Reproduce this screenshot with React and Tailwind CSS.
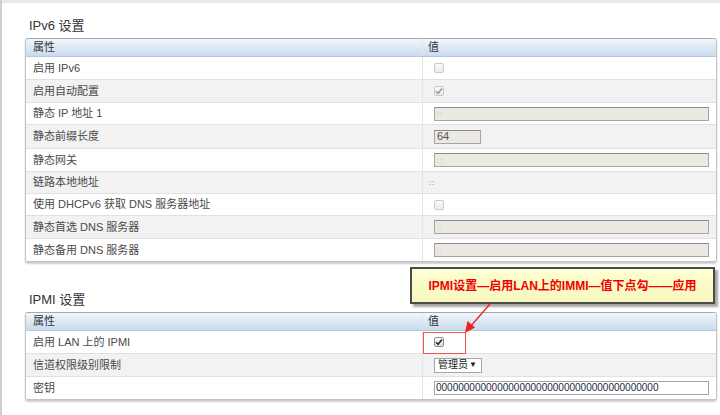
import React from 'react';

const font = { fontFamily: '"Liberation Sans", "Noto Sans CJK SC", sans-serif' };

function Box({ checked, enabled }) {
  return (
    <span
      className={
        enabled
          ? 'flex h-[10px] w-[10px] items-center justify-center rounded-[2px] border border-[#8f8f8f] bg-gradient-to-b from-[#fdfdfd] to-[#dcdcdc]'
          : 'flex h-[10px] w-[10px] items-center justify-center rounded-[2px] border border-[#c9c9c9] bg-gradient-to-b from-[#fafafa] to-[#ececec]'
      }
    >
      {checked && (
        <svg width="8" height="8" viewBox="0 0 8 8">
          <path
            d="M1 4.3 L3 6.3 L7 1.5"
            fill="none"
            stroke={enabled ? '#2b2b2b' : '#9a9a9a'}
            strokeWidth="1.6"
          />
        </svg>
      )}
    </span>
  );
}

function Disabled({ wide, text }) {
  return (
    <div
      className={
        (wide ? 'w-[275px] ' : 'w-[47px] ') +
        'flex h-[14px] shrink-0 items-center border border-[#a5a5a5] border-t-[#8a8a8a] bg-[#ebe9e2] pl-[2px]'
      }
    >
      <span className={text ? 'text-[11px] leading-none text-[#555]' : 'text-[7px] leading-none tracking-[1px] text-[#aaa]'}>
        {text || '::'}
      </span>
    </div>
  );
}

function Row({ label, h, shade, children, first }) {
  return (
    <div
      className={
        h +
        (shade ? ' bg-[#f2f2f2]' : ' bg-white') +
        (first ? '' : ' border-t border-[#e1e1e1]') +
        ' flex'
      }
    >
      <div className="flex w-[397px] shrink-0 items-center border-r border-[#e4e4e4] pl-[7px] text-[11px] text-[#4a4a4a]">
        {label}
      </div>
      <div className="flex min-w-0 flex-1 items-center pl-[11px]">{children}</div>
    </div>
  );
}

function Table({ children }) {
  return (
    <div className="overflow-hidden rounded-[3px] border border-[#c4c4c4] border-t-[#a8a8a8] shadow-[0_2px_2px_rgba(0,0,0,0.2)]">
      <div className="flex h-[18px] border-b border-[#b5c8dc] bg-gradient-to-b from-[#f1f7fd] to-[#c8dbee] text-[11px] text-[#333]">
        <div className="flex w-[397px] shrink-0 items-center border-r border-[#dde8f3] pl-[7px]">属性</div>
        <div className="flex flex-1 items-center pl-[5px]">值</div>
      </div>
      {children}
    </div>
  );
}

export default function App() {
  const ipv6 = [
    { label: '启用 IPv6', h: 'h-[22px]', v: <Box /> },
    { label: '启用自动配置', h: 'h-[23px]', v: <Box checked /> },
    { label: '静态 IP 地址 1', h: 'h-[22px]', v: <Disabled wide /> },
    { label: '静态前缀长度', h: 'h-[24px]', v: <Disabled text="64" /> },
    { label: '静态网关', h: 'h-[23px]', v: <Disabled wide /> },
    {
      label: '链路本地地址',
      h: 'h-[22px]',
      v: <span className="-ml-[5px] text-[7px] leading-none tracking-[1px] text-[#555]">::</span>,
    },
    { label: '使用 DHCPv6 获取 DNS 服务器地址', h: 'h-[22px]', v: <Box /> },
    { label: '静态首选 DNS 服务器', h: 'h-[23px]', v: <Disabled wide /> },
    { label: '静态备用 DNS 服务器', h: 'h-[23px]', v: <Disabled wide /> },
  ];

  return (
    <div className="relative flex h-[415px] w-[720px] overflow-hidden bg-white" style={font}>
      <div className="w-[2px] bg-[#cfcfcf]" />
      <div className="flex-1">
        <div className="h-[3px] bg-[#e9e9e9]" />
        <div className="pl-[23px] pr-[3px]">
          <div className="mt-[15px] h-[16px] pl-[4px] text-[13px] leading-[16px] text-[#333]">IPv6 设置</div>
          <div className="mt-[4px]">
            <Table>
              {ipv6.map((r, i) => (
                <Row key={r.label} label={r.label} h={r.h} shade={i % 2 === 1} first={i === 0}>
                  {r.v}
                </Row>
              ))}
            </Table>
          </div>

          <div className="mt-[30px] h-[16px] pl-[4px] text-[13px] leading-[16px] text-[#333]">IPMI 设置</div>
          <div className="mt-[4px]">
            <Table>
              <Row label="启用 LAN 上的 IPMI" h="h-[22px]" first>
                <Box checked enabled />
              </Row>
              <Row label="信道权限级别限制" h="h-[23px]" shade>
                <div className="flex h-[15px] w-[48px] shrink-0 items-center justify-between border border-[#a6a6a6] bg-white pl-[3px] pr-[4px] leading-none text-[#222]">
                  <span className="text-[10px]">管理员</span>
                  <span className="text-[8px]">▼</span>
                </div>
              </Row>
              <Row label="密钥" h="h-[23px]">
                <div className="flex h-[14px] w-[275px] shrink-0 items-center border border-[#a5a5a5] bg-white pl-[1px] text-[10px] leading-none text-[#1a2a44]">
                  0000000000000000000000000000000000000000
                </div>
              </Row>
            </Table>
          </div>
        </div>
      </div>

      {/* annotation overlay */}
      <div className="absolute left-[423px] top-[332px] h-[22px] w-[43px] border border-[#f05555]" />
      <div className="absolute left-[410px] top-[267px] flex h-[37px] w-[305px] items-center justify-center border-2 border-[#4a4a4a] bg-gradient-to-b from-[#ffffd2] to-[#f7f7bd] shadow-[3px_3px_2px_rgba(0,0,0,0.35)]">
        <span className="text-[12px] font-bold text-[#f00000]">IPMI设置—启用LAN上的IMMI—值下点勾——应用</span>
      </div>
      <svg className="absolute left-0 top-0" width="720" height="415">
        <line x1="490" y1="304" x2="470" y2="327" stroke="#f02020" strokeWidth="1.3" />
        <path d="M465 333 L467.5 321 L475 327.5 Z" fill="#f02020" />
      </svg>
    </div>
  );
}
